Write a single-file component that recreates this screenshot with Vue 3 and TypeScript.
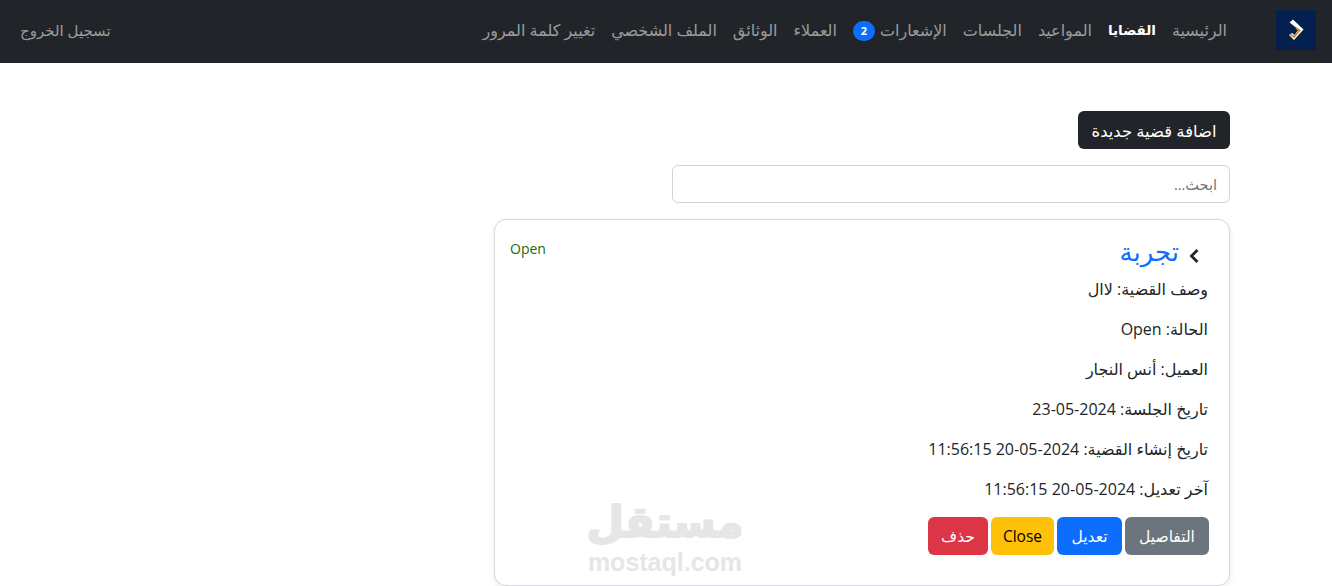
<script setup lang="ts">
const links = [
  { label: 'الرئيسية' },
  { label: 'القضايا', active: true },
  { label: 'المواعيد' },
  { label: 'الجلسات' },
  { label: 'الإشعارات', badge: 2 },
  { label: 'العملاء' },
  { label: 'الوثائق' },
  { label: 'الملف الشخصي' },
  { label: 'تغيير كلمة المرور' },
]
const details = [
  'وصف القضية: لاال',
  'الحالة: Open',
  'العميل: أنس النجار',
  'تاريخ الجلسة: 2024-05-23',
  'تاريخ إنشاء القضية: 2024-05-20 11:56:15',
  'آخر تعديل: 2024-05-20 11:56:15',
]
</script>

<template>
  <div class="page" dir="rtl">
    <nav class="navbar">
      <a class="brand" href="#" aria-label="logo">
        <svg width="16" height="22" viewBox="0 0 16 22">
          <path d="M1.5 3.5 L5 0.5 L15.5 10.5 L6 21 L1 16 L4 14 L6.5 16 L10.5 10.5 Z" fill="#fff" />
          <path d="M2.5 15.5 L6 18 L11.5 11.5 L8 9" fill="none" stroke="#c98a2c" stroke-width="1.8" />
        </svg>
      </a>
      <ul class="links">
        <li v-for="l in links" :key="l.label" :class="{ active: l.active }">
          {{ l.label }}<span v-if="l.badge" class="badge">{{ l.badge }}</span>
        </li>
      </ul>
      <a class="logout" href="#">تسجيل الخروج</a>
    </nav>

    <main class="content">
      <button class="add">اضافة قضية جديدة</button>
      <input class="search" placeholder="ابحث..." />
      <section class="card">
        <header class="card-head">
          <div class="title-wrap">
            <svg class="chev" width="12" height="16" viewBox="0 0 12 16">
              <path d="M9.5 2 L3.5 8 L9.5 14" fill="none" stroke="#212529" stroke-width="2.8" />
            </svg>
            <h2>تجربة</h2>
          </div>
          <span class="status" dir="ltr">Open</span>
        </header>
        <p v-for="d in details" :key="d">{{ d }}</p>
        <div class="actions">
          <button class="btn grey">التفاصيل</button>
          <button class="btn blue">تعديل</button>
          <button class="btn yellow">Close</button>
          <button class="btn red">حذف</button>
        </div>
      </section>
    </main>

    <div class="watermark" dir="ltr">
      <span class="wm-ar" dir="rtl">مستقل</span>
      <span class="wm-en">mostaql.com</span>
    </div>
  </div>
</template>

<style>
html, body { margin: 0; background: #fff; overflow: hidden; }
</style>

<style scoped>
.page {
  position: relative;
  height: 586px;
  overflow: hidden;
  font-family: "Open Sans", "DejaVu Sans", sans-serif;
  font-size: 15.5px;
  color: #212529;
}
.navbar {
  height: 63px;
  box-sizing: border-box;
  background: #212529;
  display: flex;
  align-items: center;
  padding: 0 16px 3px 20px;
}
.brand {
  width: 40px;
  height: 40px;
  background: #04204f;
  display: flex;
  align-items: center;
  justify-content: center;
  margin-left: 49px;
}
.links {
  display: flex;
  align-items: center;
  gap: 16px;
  list-style: none;
  margin: 0;
  padding: 0;
  flex: 1;
  font-size: 16px;
  color: rgba(255, 255, 255, 0.55);
}
.links li { white-space: nowrap; }
.links .active { color: #fff; font-weight: 700; font-size: 13.5px; }
.badge {
  display: inline-block;
  width: 22px;
  height: 20px;
  line-height: 20px;
  margin-right: 5px;
  border-radius: 10px;
  background: #0d6efd;
  color: #fff;
  font-size: 11px;
  font-weight: 700;
  text-align: center;
  vertical-align: middle;
}
.logout { color: rgba(255, 255, 255, 0.55); text-decoration: none; font-size: 15px; }
.content {
  padding: 48px 102px 0 0;
  display: flex;
  flex-direction: column;
  align-items: flex-start;
}
.add {
  width: 152px;
  height: 38px;
  border: 0;
  border-radius: 6px;
  background: #212529;
  color: #fff;
  font: inherit;
  font-size: 16.4px;
  padding: 0;
}
.search {
  width: 558px;
  height: 38px;
  box-sizing: border-box;
  margin-top: 16px;
  padding: 6px 12px;
  border: 1px solid #ced4da;
  border-radius: 6px;
  font: inherit;
  font-size: 14.5px;
  color: #212529;
  outline: none;
}
.search::placeholder { color: #6c757d; }
.card {
  width: 736px;
  height: 367px;
  box-sizing: border-box;
  margin-top: 16px;
  padding: 16px 20px 0 15px;
  border: 1px solid #d3d6da;
  border-radius: 12px;
  box-shadow: 0 2px 6px rgba(0, 0, 0, 0.08);
}
.card-head {
  display: flex;
  justify-content: space-between;
  align-items: flex-start;
  height: 38px;
  margin-bottom: 3px;
}
.title-wrap { display: flex; align-items: flex-start; gap: 9px; margin-right: 9px; }
.chev { margin-top: 12px; }
h2 {
  margin: -2px 0 0;
  font-size: 26px;
  line-height: 34px;
  font-weight: 400;
  color: #0d6efd;
}
.status { color: #146c14; font-size: 14px; line-height: 26px; }
p {
  margin: 0 1px 16px 0;
  height: 24px;
  line-height: 24px;
  font-size: 16px;
}
.actions { display: flex; gap: 3px; }
.btn {
  height: 38px;
  border: 0;
  border-radius: 6px;
  font: inherit;
  padding: 0 12px;
  color: #fff;
}
.grey { background: #6c757d; width: 84px; }
.blue { background: #0d6efd; width: 65px; }
.yellow { background: #ffc107; color: #000; width: 63px; }
.red { background: #dc3545; width: 60px; }
.watermark {
  position: absolute;
  left: 587px;
  top: 496px;
  width: 156px;
  display: flex;
  flex-direction: column;
  align-items: center;
  color: #e6e6e6;
  pointer-events: none;
}
.wm-ar { font-size: 43px; font-weight: 700; line-height: 50px; -webkit-text-stroke: 2px #e6e6e6; }
.wm-en { font-family: "Liberation Sans", sans-serif; font-size: 25px; font-weight: 700; line-height: 28px; margin-top: 2px; }
</style>
